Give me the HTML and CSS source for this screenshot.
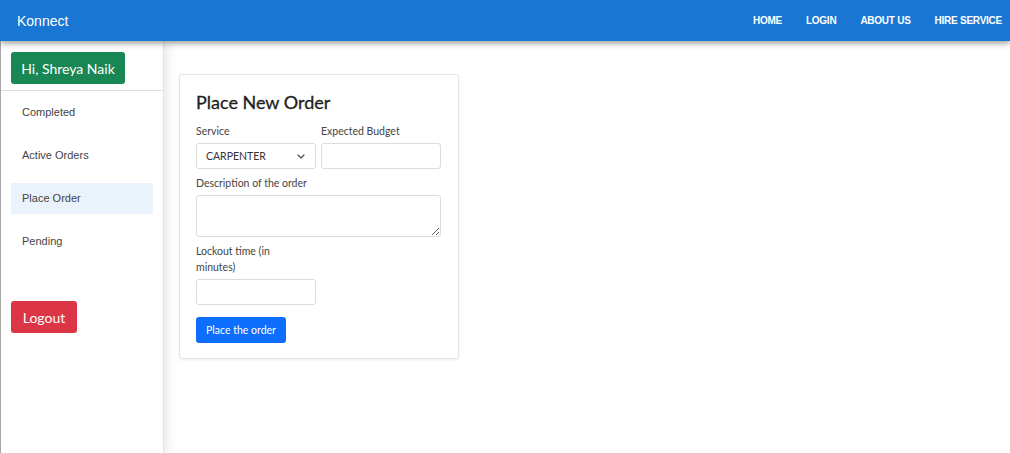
FILE: index.html
```html
<!DOCTYPE html>
<html lang="en">
<head>
<meta charset="utf-8">
<title>Konnect</title>
<link rel="stylesheet" href="styles.css">
</head>
<body>
<header class="topbar">
  <div class="brand">Konnect</div>
  <nav class="nav">
    <a class="nav-link">HOME</a>
    <a class="nav-link">LOGIN</a>
    <a class="nav-link">ABOUT US</a>
    <a class="nav-link">HIRE SERVICE</a>
  </nav>
</header>
<div class="layout">
  <aside class="sidebar">
    <div class="greet-wrap">
      <button class="btn btn-green">Hi, Shreya Naik</button>
    </div>
    <ul class="menu">
      <li class="menu-item">Completed</li>
      <li class="menu-item">Active Orders</li>
      <li class="menu-item active">Place Order</li>
      <li class="menu-item">Pending</li>
    </ul>
    <div class="logout-wrap">
      <button class="btn btn-red">Logout</button>
    </div>
  </aside>
  <main class="main">
    <section class="card">
      <h3 class="card-title">Place New Order</h3>
      <div class="row">
        <div class="field">
          <label class="label">Service</label>
          <div class="select">
            <span>CARPENTER</span>
            <svg class="chev" width="8" height="5" viewBox="0 0 8 5"><path d="M1 1l3 3 3-3" fill="none" stroke="#4a4f55" stroke-width="1.2" stroke-linecap="round" stroke-linejoin="round"/></svg>
          </div>
        </div>
        <div class="field">
          <label class="label">Expected Budget</label>
          <input class="input" type="text">
        </div>
      </div>
      <div class="field">
        <label class="label">Description of the order</label>
        <textarea class="textarea"></textarea>
      </div>
      <div class="row">
        <div class="field">
          <label class="label label-wrap">Lockout time (in minutes)</label>
          <input class="input" type="text">
        </div>
      </div>
      <button class="btn btn-blue">Place the order</button>
    </section>
  </main>
</div>
</body>
</html>
```
FILE: styles.css
```css
* { box-sizing: border-box; }
html, body { margin: 0; padding: 0; height: 100%; }
body {
  background: #fff;
  font-family: "Liberation Sans", Arial, sans-serif;
  overflow: hidden;
}
.topbar {
  position: relative;
  z-index: 2;
  height: 41px;
  background: #1976d2;
  color: #fff;
  display: flex;
  align-items: center;
  justify-content: space-between;
  padding: 0 8px 0 17px;
  box-shadow: 0 2px 4px -1px rgba(0,0,0,0.2), 0 4px 5px 0 rgba(0,0,0,0.14), 0 1px 10px 0 rgba(0,0,0,0.12);
}
.brand { font-size: 14px; }
.nav { display: flex; gap: 24px; }
.nav-link {
  font-size: 10px;
  font-weight: 700;
  letter-spacing: -0.25px;
  color: #fff;
}
.layout {
  display: flex;
  height: calc(100% - 41px);
}
.sidebar {
  position: relative;
  z-index: 1;
  width: 164px;
  flex: none;
  background: #fff;
  border-left: 1px solid #a8a8a8;
  border-right: 1px solid #e2e2e2;
  box-shadow: 3px 0 10px rgba(0,0,0,0.10);
}
.greet-wrap {
  padding: 11px 10px 6px;
  border-bottom: 1px solid #dcdcdc;
}
.btn {
  display: block;
  border: none;
  border-radius: 3px;
  color: #fff;
  cursor: pointer;
  white-space: nowrap;
}
.btn-green, .btn-red {
  font-family: "Lato", "Liberation Sans", sans-serif;
  font-size: 14px;
  height: 32px;
  padding: 0;
  text-align: center;
}
.btn-green { background: #198754; width: 114px; }
.btn-red { background: #dc3545; width: 66px; }
.menu {
  list-style: none;
  margin: 0;
  padding: 6px 10px 0;
}
.menu-item {
  height: 31px;
  line-height: 31px;
  padding-left: 11px;
  margin-bottom: 12px;
  font-size: 11px;
  color: #444;
}
.menu-item.active { background: #eaf2fb; }
.logout-wrap { padding: 32px 10px 0; }
.main {
  flex: 1;
  padding: 33px 0 0 15px;
}
.card {
  width: 280px;
  border: 1px solid #e3e3e3;
  border-radius: 3px;
  box-shadow: 0 1px 3px rgba(0,0,0,0.08);
  padding: 17px 16px 15px 16px;
  font-family: "Lato", "Liberation Sans", sans-serif;
  color: #333;
}
.card-title {
  margin: 0 0 11px;
  font-size: 18px;
  font-weight: 400;
  color: #1e1e1e;
  line-height: 20px;
  -webkit-text-stroke: 0.3px #1e1e1e;
}
.row { display: flex; gap: 5px; }
.row .field { width: 120px; }
.field { display: flex; flex-direction: column; margin-bottom: 6px; }
.label {
  font-size: 10.5px;
  line-height: 16px;
  color: #444;
  margin-bottom: 4px;
}
.label-wrap { width: 100px; }
.select, .input {
  height: 26px;
  border: 1px solid #dcdcdc;
  border-radius: 3px;
  background: #fff;
  font-family: inherit;
  margin: 0;
}
.select {
  position: relative;
  display: flex;
  align-items: center;
  padding-left: 9px;
  font-size: 10.5px;
  color: #333;
}
.chev { position: absolute; right: 10px; top: 10px; }
.textarea {
  height: 42px;
  width: 245px;
  border: 1px solid #dcdcdc;
  border-radius: 3px;
  resize: vertical;
  margin: 0;
  display: block;
}
.btn-blue {
  margin-top: 6px;
  background: #0d6efd;
  height: 26px;
  width: 90px;
  font-family: "Lato", "Liberation Sans", sans-serif;
  font-size: 10.5px;
  padding: 0;
}
```
